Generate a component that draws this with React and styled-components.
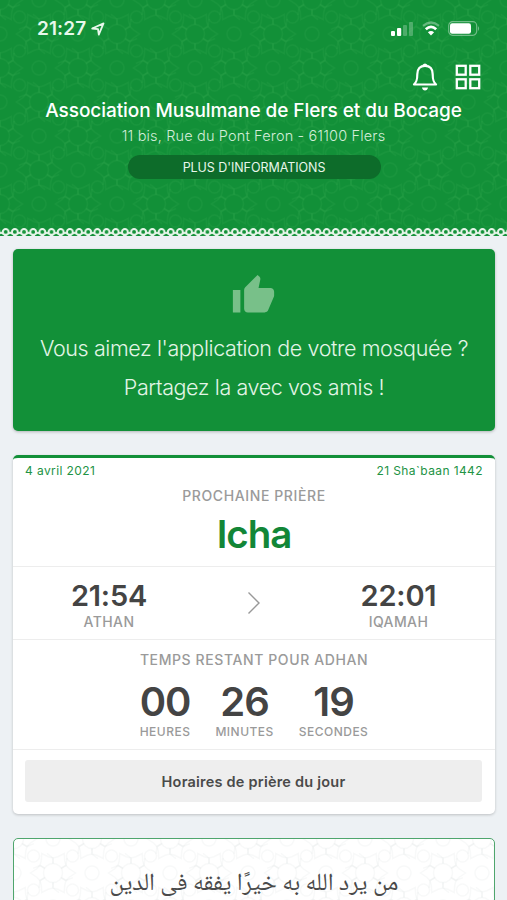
import styled, { createGlobalStyle } from "styled-components";

const GlobalStyle = createGlobalStyle`
	* {
		box-sizing: border-box;
	}
	body {
		margin: 0;
		background-color: #edf1f4;
		font-family: Inter, "Liberation Sans", sans-serif;
		overflow: hidden;
	}
`;

const Screen = styled.div`
	height: 900px;
	overflow: hidden;
`;

const Header = styled.header`
	position: relative;
	height: 237px;
	background-color: #129038;
	color: white;
	display: flex;
	flex-direction: column;
	align-items: center;
`;

const PatternLayer = styled.svg`
	position: absolute;
	inset: 0;
	width: 100%;
	height: 100%;
	color: ${(props) => props.$color};
	pointer-events: none;
`;

const LaceEdge = styled.svg`
	position: absolute;
	left: 0;
	bottom: 0;
	width: 100%;
	height: 10px;
`;

const StatusBar = styled.div`
	width: 100%;
	height: 57px;
	padding: 0 26px 0 37px;
	display: flex;
	justify-content: space-between;
	align-items: center;
	position: relative;
`;

const Clock = styled.div`
	display: flex;
	align-items: center;
	gap: 5px;
	color: #e8f8eb;
	font-size: 19px;
	font-weight: 600;
	letter-spacing: 0.1px;
`;

const StatusIcons = styled.div`
	display: flex;
	align-items: center;
	gap: 8px;
`;

const Actions = styled.div`
	width: 100%;
	height: 41px;
	padding: 0 26px 2px 0;
	display: flex;
	justify-content: flex-end;
	align-items: center;
	gap: 17px;
	position: relative;
`;

const Title = styled.h1`
	margin: 0;
	font-size: 19px;
	font-weight: 500;
	line-height: 26px;
	letter-spacing: -0.06px;
	white-space: nowrap;
	position: relative;
`;

const Address = styled.p`
	margin: 0;
	font-size: 14.5px;
	font-weight: 300;
	line-height: 24px;
	letter-spacing: 0.15px;
	color: #d3edd9;
	white-space: nowrap;
	position: relative;
`;

const InfoButton = styled.button`
	width: 253px;
	height: 24px;
	margin: 7px 0 0 1px;
	padding: 0;
	border: none;
	border-radius: 12px;
	background-color: #0d6c2a;
	color: #e8f6eb;
	font-family: inherit;
	font-size: 12.5px;
	letter-spacing: -0.05px;
	position: relative;
`;

const Main = styled.main`
	padding: 12px 12px 0 13px;
	display: flex;
	flex-direction: column;
	gap: 24px;
`;

const ShareCard = styled.section`
	height: 182px;
	padding-top: 24px;
	border-radius: 5px;
	background-color: #129038;
	box-shadow: 0 1px 3px rgba(0, 0, 0, 0.25);
	color: #e2f5e6;
	display: flex;
	flex-direction: column;
	align-items: center;
	> p {
		margin: 0;
		font-size: 21.5px;
		font-weight: 300;
		line-height: 39px;
		letter-spacing: -0.4px;
		white-space: nowrap;
	}
`;

const ThumbIcon = styled.svg`
	width: 45px;
	height: 45px;
	margin: 0 1px 11px 0;
	flex-shrink: 0;
	fill: #78c089;
`;

const PrayerCard = styled.section`
	height: 359px;
	border-top: 3px solid #129038;
	border-radius: 5px;
	background-color: white;
	box-shadow: 0 1px 3px rgba(0, 0, 0, 0.2);
	display: flex;
	flex-direction: column;
`;

const Section = styled.div`
	height: ${(props) => props.$height}px;
	border-bottom: 1.5px solid #ededed;
	display: flex;
	flex-direction: column;
	align-items: center;
`;

const Dates = styled.div`
	width: 100%;
	height: 25px;
	padding: 0 12px;
	display: flex;
	justify-content: space-between;
	color: #229345;
	font-size: 12px;
	font-weight: 400;
	line-height: 25px;
	letter-spacing: 0.4px;
`;

const Caption = styled.div`
	color: #9a9a9a;
	font-size: ${(props) => props.$size || 14}px;
	font-weight: 500;
	line-height: ${(props) => props.$line || 26}px;
	letter-spacing: ${(props) => props.$spacing || 0.6}px;
	white-space: nowrap;
`;

const PrayerName = styled.h2`
	margin: 0;
	color: #128637;
	font-size: 38.5px;
	font-weight: 600;
	line-height: 50px;
	letter-spacing: -1.1px;
`;

const Times = styled.div`
	height: 73px;
	padding-top: 5px;
	border-bottom: 1.5px solid #ededed;
	display: grid;
	grid-template-columns: 192px 1fr 193px;
	align-items: center;
	justify-items: center;
	> svg {
		margin-bottom: 6px;
	}
`;

const Time = styled.div`
	display: flex;
	flex-direction: column;
	align-items: center;
	> strong {
		color: #444;
		font-size: 29px;
		font-weight: 600;
		line-height: 32px;
		letter-spacing: -0.2px;
	}
`;

const Countdown = styled.div`
	display: flex;
	justify-content: center;
	gap: 25px;
	> div {
		display: flex;
		flex-direction: column;
		align-items: center;
	}
	strong {
		color: #444;
		font-size: 40px;
		font-weight: 600;
		line-height: 45px;
		letter-spacing: -1px;
	}
`;

const ScheduleButton = styled.button`
	height: 42px;
	margin: 10px 13px 0 12px;
	border: none;
	border-radius: 3px;
	background-color: #eee;
	color: #4a4a4a;
	font-family: inherit;
	font-size: 14.5px;
	font-weight: 600;
	letter-spacing: 0.22px;
`;

const HadithCard = styled.section`
	position: relative;
	height: 120px;
	padding-top: 33px;
	border: 1.5px solid #4fa66d;
	border-radius: 5px;
	background-color: white;
	overflow: hidden;
	> p {
		margin: 0;
		position: relative;
		color: #4a4a4a;
		font-family: "Noto Naskh Arabic", Amiri, "DejaVu Sans", serif;
		font-size: 24.5px;
		line-height: 27px;
		text-align: center;
		white-space: nowrap;
	}
`;

// Interlaced stars and rosettes, tiled over the parent
const GirihPattern = ({ id, color }) => (
	<PatternLayer $color={color} aria-hidden="true">
		<defs>
			<pattern id={id} width="78" height="68" patternUnits="userSpaceOnUse">
				<g fill="none" stroke="currentColor" strokeWidth="1.5">
					{[
						[0, 0],
						[78, 0],
						[39, 34],
						[0, 68],
						[78, 68],
					].map(([x, y]) => (
						<g key={`${x}-${y}`} transform={`translate(${x} ${y})`}>
							<circle r="9.5" />
							{[0, 60, 120, 180, 240, 300].map((angle) => (
								<path
									key={angle}
									transform={`rotate(${angle})`}
									d="M8 -5L13 -7.5L16.5 -4M8 5L13 7.5L16.5 4M13 -7.5L14 -15M16.5 -4L22.5 0L16.5 4"
								/>
							))}
						</g>
					))}
					<circle cx="39" cy="0" r="7" />
					<circle cx="39" cy="68" r="7" />
					<circle cx="19.5" cy="17" r="6" />
					<circle cx="58.5" cy="17" r="6" />
					<circle cx="0" cy="34" r="7" />
					<circle cx="78" cy="34" r="7" />
					<circle cx="19.5" cy="51" r="6" />
					<circle cx="58.5" cy="51" r="6" />
				</g>
			</pattern>
		</defs>
		<rect width="100%" height="100%" fill={`url(#${id})`} />
	</PatternLayer>
);

const Lace = () => (
	<LaceEdge aria-hidden="true">
		<defs>
			<pattern id="lace" x="1.1" width="9.17" height="10" patternUnits="userSpaceOnUse">
				<rect y="9" width="9.17" height="1" fill="#edf1f4" />
				<path d="M0 5.6L2.2 6.6M9.17 5.6L6.97 6.6" stroke="#e8f5ea" strokeWidth="2" />
				<path d="M2.4 9.2L3.4 7.4H5.8L6.8 9.2Z" fill="#edf1f4" />
				<circle cx="4.58" cy="4.9" r="2.9" fill="none" stroke="#e8f5ea" strokeWidth="2" />
			</pattern>
		</defs>
		<rect width="100%" height="10" fill="url(#lace)" />
	</LaceEdge>
);

const App = () => (
	<>
		<GlobalStyle />
		<Screen>
			<Header>
				<GirihPattern id="girih-header" color="rgba(80, 190, 100, 0.11)" />
				<StatusBar>
					<Clock>
						21:27
						<svg width="14" height="14" viewBox="0 0 14 14" fill="none" stroke="#e8f8eb" strokeWidth="1.8" strokeLinejoin="round">
							<path d="M1.2 6.5L12.5 1.4L7.8 12.6L7 7.2Z" />
						</svg>
					</Clock>
					<StatusIcons>
						<svg width="23" height="15" viewBox="0 0 23 15" fill="white">
							<rect x="0" y="10" width="4" height="5" rx="1" />
							<rect x="6" y="7" width="4.2" height="8" rx="1" />
							<rect x="12" y="4" width="4" height="11" rx="1" opacity="0.25" />
							<rect x="18" y="1" width="4" height="14" rx="1" opacity="0.25" />
						</svg>
						<svg width="18" height="15" viewBox="0 0 18 15" fill="none" stroke="white">
							<path d="M1 4.8Q9 -1.8 17 4.8" strokeWidth="2.2" opacity="0.35" />
							<path d="M3.8 8.2Q9 3.4 14.2 8.2" strokeWidth="2.7" />
							<path d="M9 14.5L5.9 11.3Q9 8.9 12.1 11.3Z" fill="white" stroke="none" />
						</svg>
						<svg width="33" height="15" viewBox="0 0 33 15" fill="none">
							<rect x="0.7" y="0.7" width="28" height="13.6" rx="4" stroke="white" strokeOpacity="0.4" strokeWidth="1.2" />
							<rect x="2" y="2.3" width="21" height="10.4" rx="2.2" fill="white" />
							<path d="M30 5Q32.2 7.5 30 10Z" fill="white" opacity="0.4" />
						</svg>
					</StatusIcons>
				</StatusBar>
				<Actions>
					<svg width="26" height="28" viewBox="0 0 26 28" fill="none" stroke="white" strokeWidth="2.2" strokeLinejoin="round">
						<path d="M2 21.5C4.6 18.8 5.3 17 5.3 11.2C5.3 5.7 8 2.8 13 2.8C18 2.8 20.7 5.7 20.7 11.2C20.7 17 21.4 18.8 24 21.5Z" />
						<path d="M11 2.6Q13 0 15 2.6" strokeWidth="1.6" />
						<path d="M10 24.5Q10.5 27.4 13 27.4Q15.5 27.4 16 24.5Z" fill="white" stroke="none" />
					</svg>
					<svg width="26" height="26" viewBox="0 0 26 26" fill="none" stroke="white" strokeWidth="2.3">
						<rect x="1.8" y="1.8" width="8.9" height="8.9" />
						<rect x="15.3" y="1.8" width="8.9" height="8.9" />
						<rect x="1.8" y="15.3" width="8.9" height="8.9" />
						<rect x="15.3" y="15.3" width="8.9" height="8.9" />
					</svg>
				</Actions>
				<Title>Association Musulmane de Flers et du Bocage</Title>
				<Address>11 bis, Rue du Pont Feron - 61100 Flers</Address>
				<InfoButton>PLUS D'INFORMATIONS</InfoButton>
				<Lace />
			</Header>
			<Main>
				<ShareCard>
					<ThumbIcon viewBox="0 0 24 24">
						<path d="M1 21h4V9H1v12zm22-11c0-1.1-.9-2-2-2h-6.31l.95-4.57.03-.32c0-.41-.17-.79-.44-1.06L14.17 1 7.59 7.59C7.22 7.95 7 8.45 7 9v10c0 1.1.9 2 2 2h9c.83 0 1.54-.5 1.84-1.22l3.02-7.05c.09-.23.14-.47.14-.73v-2z" />
					</ThumbIcon>
					<p>Vous aimez l'application de votre mosquée ?</p>
					<p>Partagez la avec vos amis !</p>
				</ShareCard>
				<PrayerCard>
					<Section $height={109}>
						<Dates>
							<span>4 avril 2021</span>
							<span>21 Sha`baan 1442</span>
						</Dates>
						<Caption>PROCHAINE PRIÈRE</Caption>
						<PrayerName>Icha</PrayerName>
					</Section>
					<Times>
						<Time>
							<strong>21:54</strong>
							<Caption $line={20} $spacing={0.4}>ATHAN</Caption>
						</Time>
						<svg width="14" height="24" viewBox="0 0 14 24" fill="none" stroke="#999" strokeWidth="1.4">
							<path d="M1.5 1.5L12 12L1.5 22.5" />
						</svg>
						<Time>
							<strong>22:01</strong>
							<Caption $line={20} $spacing={0.4}>IQAMAH</Caption>
						</Time>
					</Times>
					<Section $height={110}>
						<Caption $line={39}>TEMPS RESTANT POUR ADHAN</Caption>
						<Countdown>
							<div>
								<strong>00</strong>
								<Caption $size={12} $line={16} $spacing={0.48}>HEURES</Caption>
							</div>
							<div>
								<strong>26</strong>
								<Caption $size={12} $line={16} $spacing={0.48}>MINUTES</Caption>
							</div>
							<div>
								<strong>19</strong>
								<Caption $size={12} $line={16} $spacing={0.48}>SECONDES</Caption>
							</div>
						</Countdown>
					</Section>
					<ScheduleButton>Horaires de prière du jour</ScheduleButton>
				</PrayerCard>
				<HadithCard>
					<GirihPattern id="girih-card" color="rgba(90, 110, 120, 0.045)" />
					<p dir="rtl" lang="ar">من يرد الله به خيرًا يفقه فى الدين</p>
				</HadithCard>
			</Main>
		</Screen>
	</>
);

export default App;
